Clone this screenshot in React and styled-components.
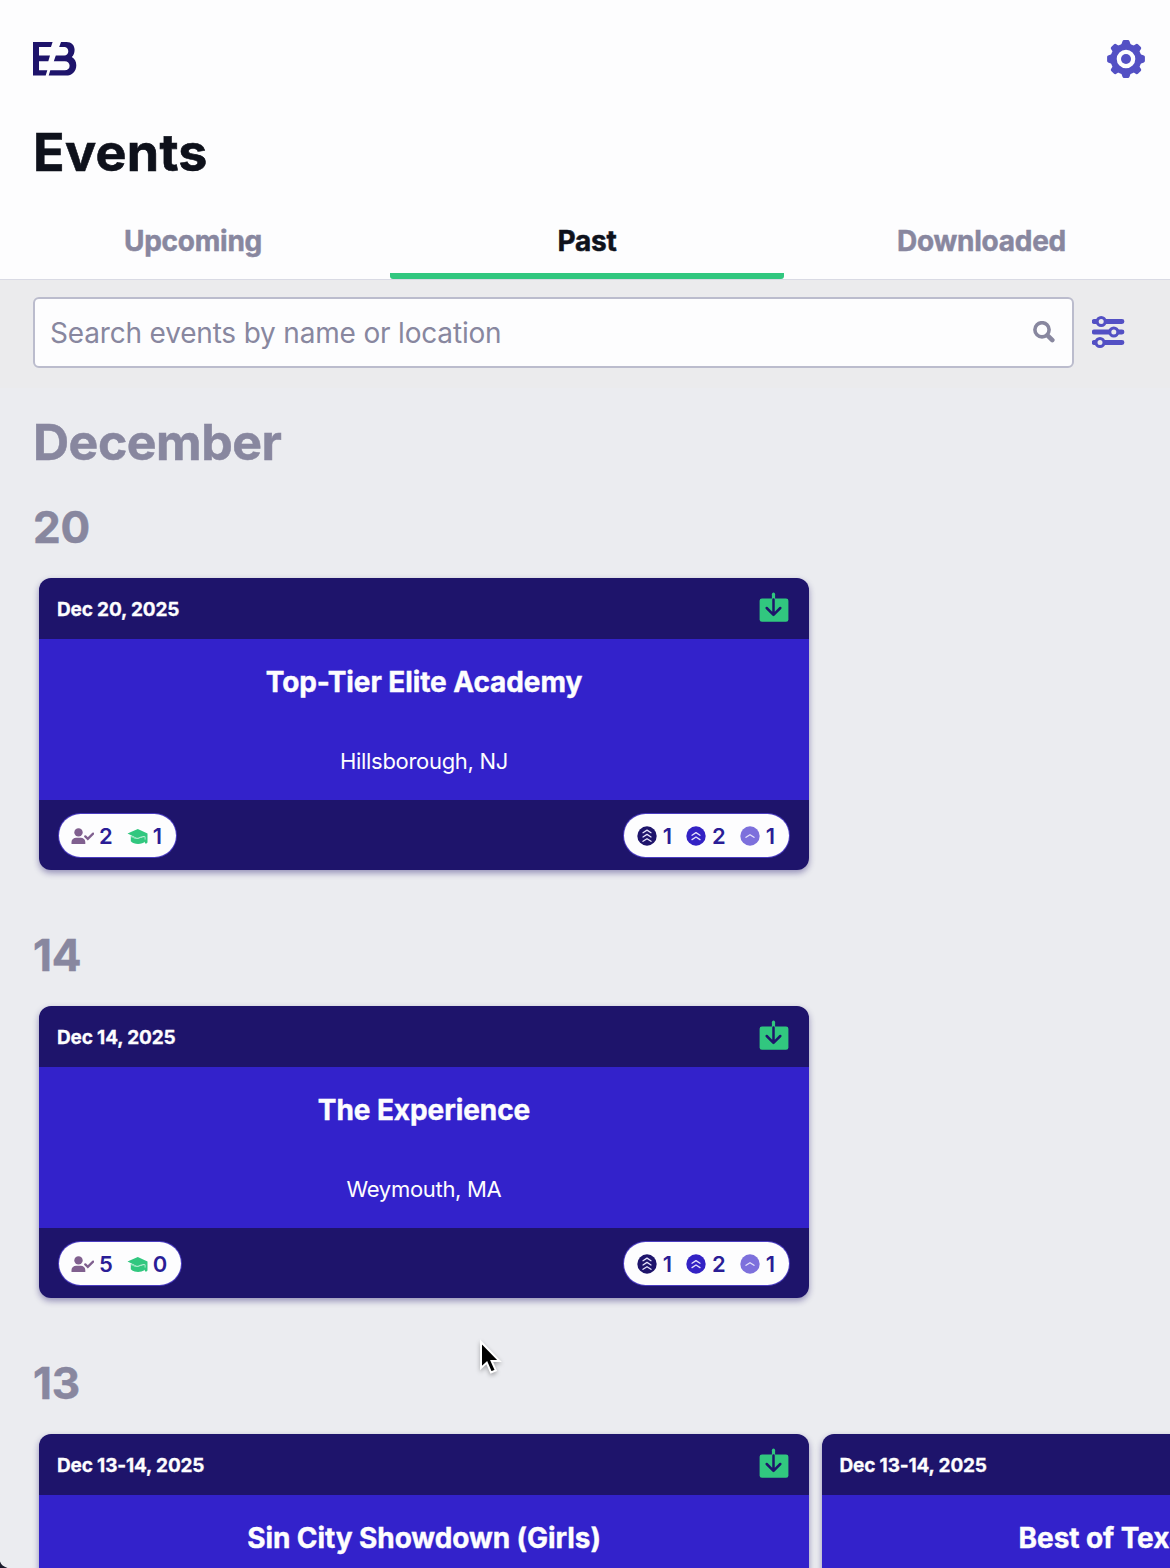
import React from 'react';
import styled, { createGlobalStyle } from 'styled-components';

const GlobalStyle = createGlobalStyle`
    * {
        box-sizing: border-box;
    }
    body {
        margin: 0;
        background: #ebecf0;
        font-family: Inter, "Liberation Sans", sans-serif;
    }
    h1, h2, h3, h4, p {
        margin: 0;
    }
`

const Screen = styled.div`
    position: relative;
    width: 1170px;
    height: 1568px;
    overflow: hidden;
    background: #ebecf0;
`

const Header = styled.header`
    height: 280px;
    background: #fdfdfe;
    border-bottom: 1px solid #d9dae4;
    display: flex;
    flex-direction: column;
`

const TopBar = styled.div`
    display: flex;
    justify-content: space-between;
    align-items: center;
    height: 117px;
    padding: 0 24px 0 33px;
`

const PageTitle = styled.h1`
    padding-left: 33px;
    height: 84px;
    line-height: 72px;
    font-size: 52px;
    font-weight: 700;
    letter-spacing: 0.3px;
    -webkit-text-stroke: 0.6px;
    color: #0e111b;
`

const Tabs = styled.nav`
    flex: 1;
    display: grid;
    grid-template-columns: 390px 394px 386px;
`

const Tab = styled.button`
    display: flex;
    justify-content: center;
    padding: 20px ${({ $right }) => $right || 0}px 0 ${({ $left }) => $left || 0}px;
    border: 0;
    border-bottom: 6px solid transparent;
    font-family: inherit;
    font-size: 28px;
    line-height: 40px;
    font-weight: 700;
    letter-spacing: -0.25px;
    -webkit-text-stroke: 0.5px;
    color: ${({ $active }) => ($active ? '#0e111b' : '#88879f')};
    background: ${({ $active }) =>
        $active ? 'linear-gradient(#31c77f, #31c77f) bottom / 100% 6px no-repeat border-box' : 'none'};
    border-radius: 3px;
`

const SearchBar = styled.div`
    display: flex;
    align-items: center;
    gap: 18px;
    height: 108px;
    padding: 0 44px 3px 33px;
    background: #ebebed;
`

const SearchField = styled.label`
    flex: 1;
    display: flex;
    align-items: center;
    height: 71px;
    padding: 0 17px 0 15px;
    background: #fdfdfe;
    border: 2px solid #bbbccd;
    border-radius: 6px;
`

const SearchInput = styled.input`
    flex: 1;
    border: 0;
    padding: 0;
    outline: none;
    background: none;
    font-family: inherit;
    font-size: 28px;
    letter-spacing: -0.18px;
    color: #0e111b;
    &::placeholder {
        color: #88879f;
        opacity: 1;
    }
`

const Month = styled.h2`
    padding-left: 33px;
    height: 110px;
    line-height: 109px;
    font-size: 50px;
    font-weight: 700;
    letter-spacing: -0.5px;
    -webkit-text-stroke: 0.5px;
    color: #88879f;
`

const Day = styled.section`
    height: 428px;
`

const DayNumber = styled.h3`
    padding-left: 33px;
    height: 80px;
    line-height: 58px;
    font-size: 44px;
    font-weight: 700;
    letter-spacing: -0.1px;
    -webkit-text-stroke: 0.5px;
    color: #88879f;
`

const CardRow = styled.div`
    display: flex;
    gap: 12.5px;
    padding-left: 39px;
`

const Card = styled.article`
    flex: none;
    width: 770px;
    height: 292px;
    display: flex;
    flex-direction: column;
    overflow: hidden;
    border-radius: 12px;
    background: #1e146b;
    color: #fdfdfe;
    box-shadow: 0 3px 6px rgba(30, 20, 107, 0.42);
`

const CardHeader = styled.div`
    display: flex;
    align-items: center;
    justify-content: space-between;
    height: 61px;
    padding: 0 20px 0 18px;
`

const CardDate = styled.p`
    padding-top: 1px;
    font-size: 19px;
    font-weight: 700;
    letter-spacing: -0.15px;
    -webkit-text-stroke: 0.3px;
`

const CardBody = styled.div`
    height: 161px;
    padding-top: 24px;
    text-align: center;
    background: #3322cb;
`

const CardTitle = styled.h4`
    height: 78px;
    line-height: 39px;
    font-size: 28px;
    font-weight: 700;
    letter-spacing: -0.08px;
    white-space: nowrap;
    -webkit-text-stroke: 0.4px;
`

const CardPlace = styled.p`
    line-height: 40px;
    font-size: 22px;
    letter-spacing: -0.3px;
`

const CardFooter = styled.div`
    flex: 1;
    display: flex;
    justify-content: space-between;
    align-items: center;
    padding: 0 20px;
`

const Pill = styled.div`
    display: flex;
    align-items: center;
    gap: 14px;
    height: 43px;
    padding: 2px 14px 0 ${({ $left }) => $left}px;
    border-radius: 22px;
    background: #fdfdfe;
    box-shadow: 0 0 0 1px #4a3cc0;
`

const Count = styled.span`
    display: flex;
    align-items: center;
    gap: ${({ $gap }) => $gap}px;
    font-size: 22px;
    font-weight: 600;
    line-height: 26px;
    color: #2a1d96;
`

const Pointer = styled.svg`
    position: absolute;
    left: 474px;
    top: 1335px;
    filter: drop-shadow(0 2px 2px rgba(0, 0, 0, 0.3));
`

const WindowCorner = styled.svg`
    position: absolute;
    left: 0;
    bottom: 0;
`

const Logo = () => (
    <svg width="44" height="34" viewBox="33 42 44 34" fill="#1e146b">
        <path d="M33 42H52.6L51 47H39V55.5H50L48.3 61.2H39V70.3H47.3L45.7 75.6H33Z" />
        <path d="M61 42H66.5C71.5 42 74.6 45.2 74.6 49.8C74.6 53.2 73.5 55.6 71.8 57.1C74.6 58.6 76.3 61.5 76.3 65.2C76.3 71.4 72 75.6 66 75.6H48.7L50.3 70.3H64.8C67.6 70.3 69.6 68.6 69.6 65.8C69.6 63 67.6 61.2 64.8 61.2H53.8L55.8 55.5H64.3C66.7 55.5 68.3 53.9 68.3 51.3C68.3 48.6 66.7 47 64.3 47H59.2Z" />
    </svg>
)

const GearIcon = () => (
    <svg width="40" height="40" viewBox="-20 -20 40 40">
        <g fill="#5350c4" stroke="#5350c4" strokeWidth="3" strokeLinejoin="round">
            {[0, 90, 180, 270].map((angle) => (
                <path key={angle} d="M-2 -17.4L2 -17.4L4 -12L-4 -12Z" transform={`rotate(${angle})`} />
            ))}
            {[45, 135, 225, 315].map((angle) => (
                <path key={angle} d="M-2 -17.4L2 -17.4L3.2 -12L-3.2 -12Z" transform={`rotate(${angle})`} />
            ))}
        </g>
        <circle r="12.4" fill="none" stroke="#5350c4" strokeWidth="6.2" />
        <circle r="5" fill="#5350c4" />
    </svg>
)

const SearchIcon = () => (
    <svg width="22" height="24" viewBox="0 0 22 24" fill="none" stroke="#88879f">
        <circle cx="9" cy="8.8" r="7.1" strokeWidth="3.6" />
        <path d="M14.5 14.3L19.3 19.1" strokeWidth="4.6" strokeLinecap="round" />
    </svg>
)

const FilterIcon = () => (
    <svg width="34" height="34" viewBox="1 0 34 34" stroke="#5350c4" fill="#ebebed">
        <path d="M3.2 5.5H31M3.2 16H31M3.2 26.5H31" strokeWidth="4.8" strokeLinecap="round" />
        <circle cx="10.2" cy="5.5" r="4" strokeWidth="3" />
        <circle cx="22.8" cy="16" r="4" strokeWidth="3" />
        <circle cx="9" cy="26.5" r="4" strokeWidth="3" />
    </svg>
)

const DownloadIcon = () => (
    <svg width="30" height="33" viewBox="0 1 30 33" fill="none">
        <rect x="0.6" y="7.4" width="28.8" height="23.4" rx="2.4" fill="#31c77f" />
        <path d="M14.5 3.2V8.5" stroke="#31c77f" strokeWidth="3.2" strokeLinecap="round" />
        <path d="M14.5 8.6V23.8M7.7 17L14.5 23.8L21.3 17" stroke="#1e146b" strokeWidth="2.5" strokeLinecap="round" strokeLinejoin="round" />
    </svg>
)

const PersonCheckIcon = () => (
    <svg width="23" height="17" viewBox="-0.5 0 23 17" fill="#80608f">
        <circle cx="7" cy="4.4" r="4.2" />
        <path d="M0 16V14C0 11.4 2.2 9.8 4.6 9.8H9.2C11.8 9.8 13.8 11.5 13.8 14V16Z" />
        <path d="M13.8 8.4L16.3 10.8L21.6 5.6" fill="none" stroke="#80608f" strokeWidth="2.3" strokeLinecap="round" />
    </svg>
)

const CapIcon = () => (
    <svg width="21" height="17" viewBox="-0.5 0 21 17" fill="#31c77f">
        <path d="M0 5.4L10.3 1L20 5.4V14.6L18.4 16L17 14V8L10.3 10.6Z" />
        <path d="M3.3 7.8L10.3 10.8L17.8 8.3V13.2C14.8 16.8 6.6 17 3.3 13.2Z" />
        <path d="M3.2 8.6C5.4 8.6 6.5 10.8 9.5 10.4C12.2 10 13 8.3 17.6 8.7V11.6" fill="none" stroke="#c5f0da" strokeWidth="0.8" />
    </svg>
)

const levels = {
    1: { color: '#7d70dc', tops: [11.3] },
    2: { color: '#3322c4', tops: [9.2, 13.6] },
    3: { color: '#1e146b', tops: [6.7, 11, 15.3] },
}

const LevelIcon = ({ level }) => (
    <svg width="20" height="20" viewBox="0 0 20 20">
        <circle cx="10" cy="10" r="9.7" fill={levels[level].color} />
        {levels[level].tops.map((y) => (
            <path
                key={y}
                d={`M6 ${y}L10 ${y - 2.6}L14 ${y}`}
                fill="none"
                stroke="#e6e3fb"
                strokeWidth="1.3"
                strokeLinecap="round"
                strokeLinejoin="round"
            />
        ))}
    </svg>
)

const EventCard = ({ event }) => (
    <Card>
        <CardHeader>
            <CardDate>{event.date}</CardDate>
            <DownloadIcon />
        </CardHeader>
        <CardBody>
            <CardTitle>{event.title}</CardTitle>
            <CardPlace>{event.place}</CardPlace>
        </CardBody>
        {event.levels && (
            <CardFooter>
                <Pill $left={12}>
                    <Count $gap={5}><PersonCheckIcon />{event.people}</Count>
                    <Count $gap={5}><CapIcon />{event.grads}</Count>
                </Pill>
                <Pill $left={13}>
                    <Count $gap={6}><LevelIcon level={3} />{event.levels[0]}</Count>
                    <Count $gap={6}><LevelIcon level={2} />{event.levels[1]}</Count>
                    <Count $gap={6}><LevelIcon level={1} />{event.levels[2]}</Count>
                </Pill>
            </CardFooter>
        )}
    </Card>
)

const days = [
    {
        day: 20,
        events: [
            { date: 'Dec 20, 2025', title: 'Top-Tier Elite Academy', place: 'Hillsborough, NJ', people: 2, grads: 1, levels: [1, 2, 1] },
        ],
    },
    {
        day: 14,
        events: [
            { date: 'Dec 14, 2025', title: 'The Experience', place: 'Weymouth, MA', people: 5, grads: 0, levels: [1, 2, 1] },
        ],
    },
    {
        day: 13,
        events: [
            { date: 'Dec 13-14, 2025', title: 'Sin City Showdown (Girls)' },
            { date: 'Dec 13-14, 2025', title: 'Best of Texas Holiday Event' },
        ],
    },
]

const App = () => {
    return (
        <Screen>
            <GlobalStyle />
            <Header>
                <TopBar>
                    <Logo />
                    <GearIcon />
                </TopBar>
                <PageTitle>Events</PageTitle>
                <Tabs>
                    <Tab $right={4}>Upcoming</Tab>
                    <Tab $active>Past</Tab>
                    <Tab $left={9}>Downloaded</Tab>
                </Tabs>
            </Header>
            <SearchBar>
                <SearchField>
                    <SearchInput placeholder="Search events by name or location" />
                    <SearchIcon />
                </SearchField>
                <FilterIcon />
            </SearchBar>
            <Month>December</Month>
            {days.map(({ day, events }) => (
                <Day key={day}>
                    <DayNumber>{day}</DayNumber>
                    <CardRow>
                        {events.map((event) => (
                            <EventCard key={event.title} event={event} />
                        ))}
                    </CardRow>
                </Day>
            ))}
            <Pointer width="30" height="44" viewBox="0 0 30 44">
                <path
                    d="M7 7V33L12.8 27.6L17 37.5L21.8 35.4L17.6 26H25.5Z"
                    fill="#000"
                    stroke="#fff"
                    strokeWidth="2"
                />
            </Pointer>
            <WindowCorner width="8" height="8" viewBox="0 0 8 8">
                <path d="M0 1.5Q1.5 6 7.5 8H0Z" fill="#1b1b2c" />
            </WindowCorner>
        </Screen>
    )
}

export default App;
